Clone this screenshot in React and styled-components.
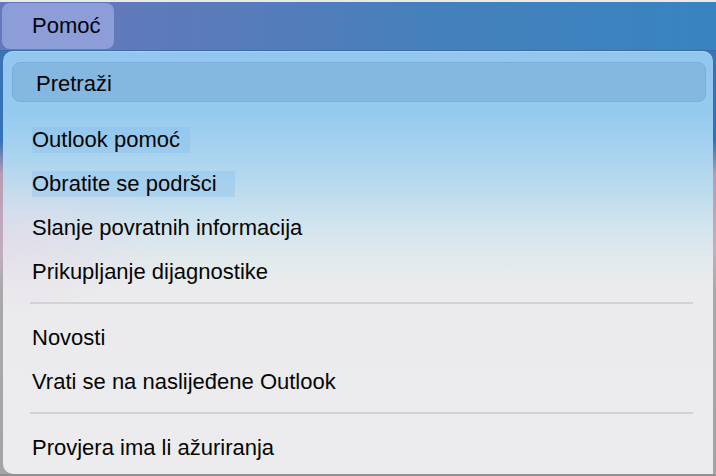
import React from "react";
import styled, { createGlobalStyle } from "styled-components";

const GlobalStyle = createGlobalStyle`
  html, body { margin: 0; padding: 0; overflow: hidden; }
  body { font-family: "Liberation Sans", Arial, sans-serif; }
`;

const Screen = styled.div`
  width: 716px;
  height: 476px;
  display: flex;
  flex-direction: column;
  background: linear-gradient(
    to bottom,
    #e9e9ea 0px,
    #e9e9ea 2px,
    #3a74b4 52px,
    #3272b3 140px,
    #b79db3 175px,
    #c2aebf 250px,
    #a9a9ab 290px,
    #a4a4a6 476px
  );
  font-family: "Liberation Sans", Arial, sans-serif;
  color: #050505;
`;

const TopLine = styled.div`
  height: 2px;
  flex: none;
`;

const MenuBar = styled.div`
  height: 48px;
  flex: none;
  display: flex;
  align-items: center;
  padding-left: 2px;
  background: linear-gradient(90deg, #6678bd 0%, #5a7bba 30%, #4580bb 60%, #3784c1 100%);
  border-bottom: 1px solid #3a6a9e;
`;

const MenuTitle = styled.div`
  width: 112px;
  height: 46px;
  box-sizing: border-box;
  padding-left: 30px;
  border-radius: 8px;
  background: #8c9dd8;
  display: flex;
  align-items: center;
  font-size: 22px;
  color: #05050c;
`;

const Panel = styled.div`
  flex: none;
  margin: 0 3px 0 3px;
  height: 423px;
  box-sizing: border-box;
  border-top: 1px solid #a8d2f3;
  border-radius: 10px 10px 0 10px;
  padding: 10px 7px 0 9px;
  display: flex;
  flex-direction: column;
  background:
    radial-gradient(ellipse 160px 80px at 0px 190px, rgba(232, 214, 232, 0.55), rgba(232, 214, 232, 0)),
    linear-gradient(
      to bottom,
      #93c6ee 0px,
      #95caee 60px,
      #b6d9ee 128px,
      #d4e5ee 178px,
      #e2eaec 208px,
      #ebebed 238px,
      #ececee 423px
    );
`;

const SearchBox = styled.div`
  height: 40px;
  box-sizing: border-box;
  border-radius: 8px;
  background: #85b8e1;
  border: 1px solid #7aafdb;
  display: flex;
  align-items: center;
  padding: 3px 0 0 23px;
  font-size: 22px;
  flex: none;
`;

const List = styled.div`
  margin-top: 16px;
  display: flex;
  flex-direction: column;
  margin-left: -9px;
  margin-right: -7px;
`;

const Row = styled.div`
  height: 44px;
  display: flex;
  align-items: center;
  padding-left: 29px;
  font-size: 22px;
  white-space: nowrap;
`;

const Label = styled.span`
  background: ${(p) => (p.$marked ? "rgba(128, 188, 236, 0.32)" : "transparent")};
  padding-right: ${(p) => p.$trail || 0}px;
`;

const Separator = styled.div`
  height: 2px;
  margin: 8px 20px 12px 27px;
  background: #d3d3d5;
`;

const BottomEdge = styled.div`
  flex: 1;
  background: #8f8f91;
`;

const groups = [
  [
    { text: "Outlook pomoć", marked: true, trail: 10 },
    { text: "Obratite se podršci", marked: true, trail: 18 },
    { text: "Slanje povratnih informacija" },
    { text: "Prikupljanje dijagnostike" },
  ],
  [{ text: "Novosti" }, { text: "Vrati se na naslijeđene Outlook" }],
  [{ text: "Provjera ima li ažuriranja" }],
];

export default function App() {
  return (
    <>
      <GlobalStyle />
      <Screen>
        <TopLine />
        <MenuBar>
          <MenuTitle>Pomoć</MenuTitle>
        </MenuBar>
        <Panel>
          <SearchBox>Pretraži</SearchBox>
          <List>
            {groups.map((g, gi) => (
              <React.Fragment key={gi}>
                {gi > 0 && <Separator />}
                {g.map((it) => (
                  <Row key={it.text}>
                    <Label $marked={it.marked} $trail={it.trail}>
                      {it.text}
                    </Label>
                  </Row>
                ))}
              </React.Fragment>
            ))}
          </List>
        </Panel>
        <BottomEdge />
      </Screen>
    </>
  );
}
